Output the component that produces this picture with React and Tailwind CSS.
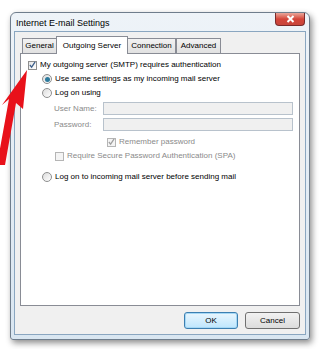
import React from 'react';

const font = { fontFamily: '"Liberation Sans", Arial, sans-serif' };

const Check = ({ checked, disabled }) => (
  <span
    className={`inline-flex items-center justify-center w-[9px] h-[9px] border ${
      disabled ? 'border-[#b5b5b5] bg-[#f4f4f4]' : 'border-[#8f8f8f] bg-gradient-to-br from-[#e6e6e6] to-white'
    }`}
  >
    {checked && (
      <svg width="8" height="8" viewBox="0 0 8 8">
        <path d="M1 4 L3 6.5 L7 0.5" fill="none" stroke={disabled ? '#a0a0a0' : '#3d5f8a'} strokeWidth="1.4" />
      </svg>
    )}
  </span>
);

const Radio = ({ checked }) => (
  <span className="inline-flex items-center justify-center w-[10px] h-[10px] rounded-full border border-[#8e8f8f] bg-gradient-to-br from-[#dcdcdc] to-white">
    {checked && <span className="w-[5px] h-[5px] rounded-full bg-[#2c7a9c]" />}
  </span>
);

const Tab = ({ label, active, w }) => (
  <div
    className={
      active
        ? 'h-[18px] flex items-center justify-center bg-white border border-b-0 border-[#898c95] -mx-[1px] z-10 relative mb-[-1px]'
        : 'h-[15px] flex items-center justify-center bg-gradient-to-b from-[#f2f2f2] to-[#e1e1e1] border border-b-0 border-[#898c95]'
    }
    style={{ width: w }}
  >
    {label}
  </div>
);

export default function App() {
  return (
    <div className="relative w-[321px] h-[349px] bg-white overflow-hidden text-[8px] text-black" style={font}>
      <div className="ml-[10px] mt-[12px] w-[300px] h-[328px] flex flex-col rounded-t-[6px] rounded-b-[3px] border border-[#6f7d8c] bg-gradient-to-b from-[#eef3f8] to-[#d9e6f1] shadow-[2px_3px_6px_rgba(0,0,0,0.45)]">
        <div className="h-[18px] flex items-start justify-between pl-[5px] pr-[4px]">
          <span className="mt-[4px] text-[9px]">Internet E-mail Settings</span>
          <div className="w-[30px] h-[13px] rounded-b-[4px] border border-t-0 border-[#7a2a2a] bg-gradient-to-b from-[#e9a59a] via-[#d4453a] to-[#c8463c] flex items-center justify-center">
            <svg width="9" height="8" viewBox="0 0 9 8">
              <path d="M1.5 1 L7.5 7 M7.5 1 L1.5 7" stroke="white" strokeWidth="2" />
            </svg>
          </div>
        </div>
        <div className="flex-1 mx-[3px] mb-[4px] border border-[#8aa6c0] bg-[#f0f0f0] flex flex-col px-[5px] pb-[5px]">
          <div className="flex items-end pt-[3px] pl-[2px] h-[21px]">
            <Tab label="General" w={35} />
            <Tab label="Outgoing Server" w={72} active />
            <Tab label="Connection" w={49} />
            <Tab label="Advanced" w={45} />
          </div>
          <div className="flex-1 bg-white border border-[#898c95] pl-[7px] pt-[5px] flex flex-col">
            <div className="flex items-center gap-[3px] h-[12px]">
              <Check checked />
              <span>My outgoing server (SMTP) requires authentication</span>
            </div>
            <div className="ml-[14px] mt-[1px] flex items-center gap-[3px] h-[14px]">
              <Radio checked />
              <span>Use same settings as my incoming mail server</span>
            </div>
            <div className="ml-[14px] flex items-center gap-[3px] h-[14px]">
              <Radio />
              <span>Log on using</span>
            </div>
            <div className="ml-[26px] mt-[2px] flex items-center h-[13px] text-[#8a8a8a]">
              <span className="w-[49px]">User Name:</span>
              <div className="w-[190px] h-[13px] border border-[#b8c2cc] bg-[#f0f0f0]" />
            </div>
            <div className="ml-[26px] mt-[3px] flex items-center h-[13px] text-[#8a8a8a]">
              <span className="w-[49px]">Password:</span>
              <div className="w-[190px] h-[13px] border border-[#b8c2cc] bg-[#f0f0f0]" />
            </div>
            <div className="ml-[79px] mt-[5px] flex items-center gap-[3px] h-[12px] text-[#8a8a8a]">
              <Check checked disabled />
              <span>Remember password</span>
            </div>
            <div className="ml-[27px] mt-[2px] flex items-center gap-[3px] h-[12px] text-[#8a8a8a]">
              <Check disabled />
              <span>Require Secure Password Authentication (SPA)</span>
            </div>
            <div className="ml-[14px] mt-[8px] flex items-center gap-[3px] h-[14px]">
              <Radio />
              <span>Log on to incoming mail server before sending mail</span>
            </div>
          </div>
          <div className="flex justify-end gap-[7px] mt-[6px]">
            <button className="w-[54px] h-[17px] rounded-[3px] border border-[#3c7fb1] bg-gradient-to-b from-[#eaf6fd] to-[#bee6fd] shadow-[inset_0_0_0_1px_#a6d8f5] text-[8px] text-black">
              OK
            </button>
            <button className="w-[55px] h-[17px] rounded-[3px] border border-[#707070] bg-gradient-to-b from-[#f2f2f2] to-[#dcdcdc] text-[8px] text-black">
              Cancel
            </button>
          </div>
        </div>
      </div>
      <svg className="absolute left-0 top-0" width="40" height="170" viewBox="0 0 40 170">
        <polygon points="27,70 23,109 16,103 5,165 -3,165 9,99 2,105" fill="#e8111a" />
      </svg>
    </div>
  );
}
